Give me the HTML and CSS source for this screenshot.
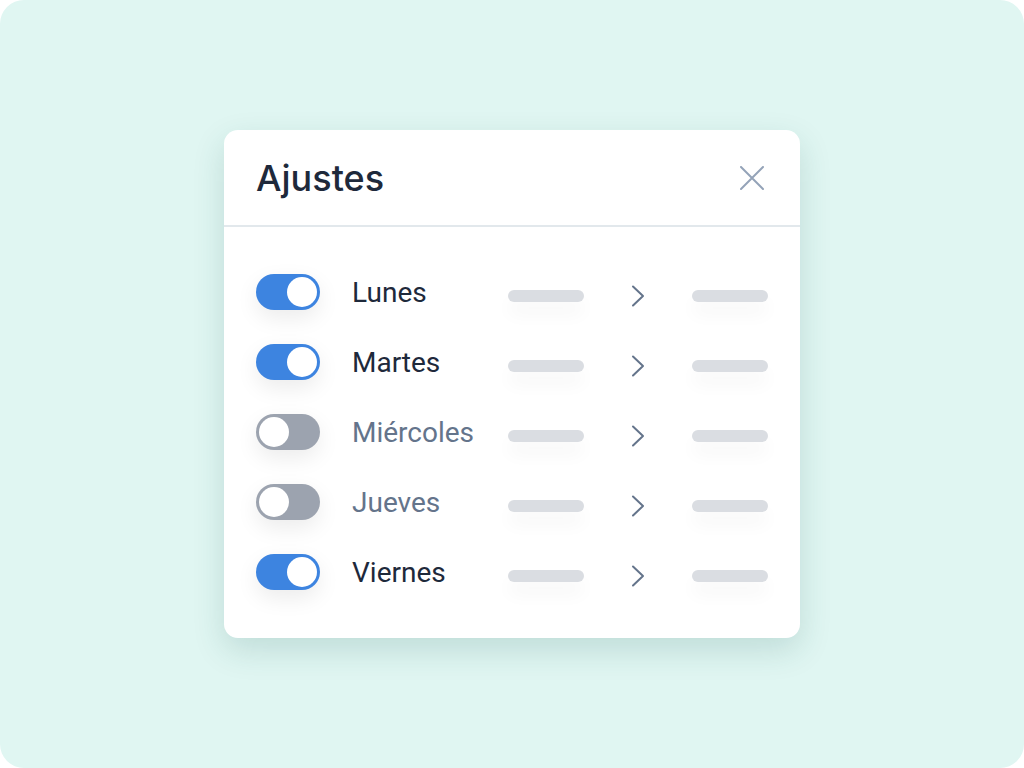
FILE: index.html
```html
<!DOCTYPE html>
<html lang="es">
<head>
    <meta charset="UTF-8">
    <meta name="viewport" content="width=device-width, initial-scale=1.0">
    <title>Ajustes</title>
    <link rel="stylesheet" href="styles.css">
</head>
<body>
    <div class="stage">
        <div class="settings-card">
            <div class="settings-header">
                <h2>Ajustes</h2>
                <button class="close-btn" aria-label="Cerrar">
                    <svg width="24" height="24" viewBox="0 0 24 24" fill="none" stroke="#94a3b8" stroke-width="2" stroke-linecap="round">
                        <path d="M1 1L23 23M23 1L1 23"/>
                    </svg>
                </button>
            </div>
            <div class="settings-body">
                <div class="day-row">
                    <span class="toggle on"><span class="knob"></span></span>
                    <span class="day-name">Lunes</span>
                    <span class="bar"></span>
                    <span class="chevron"><svg width="14" height="22" viewBox="0 0 14 22" fill="none" stroke="#64748b" stroke-width="2" stroke-linecap="round" stroke-linejoin="round"><path d="M2 1.5L12 11L2 20.5"/></svg></span>
                    <span class="bar"></span>
                </div>
                <div class="day-row">
                    <span class="toggle on"><span class="knob"></span></span>
                    <span class="day-name">Martes</span>
                    <span class="bar"></span>
                    <span class="chevron"><svg width="14" height="22" viewBox="0 0 14 22" fill="none" stroke="#64748b" stroke-width="2" stroke-linecap="round" stroke-linejoin="round"><path d="M2 1.5L12 11L2 20.5"/></svg></span>
                    <span class="bar"></span>
                </div>
                <div class="day-row">
                    <span class="toggle"><span class="knob"></span></span>
                    <span class="day-name off">Miércoles</span>
                    <span class="bar"></span>
                    <span class="chevron"><svg width="14" height="22" viewBox="0 0 14 22" fill="none" stroke="#64748b" stroke-width="2" stroke-linecap="round" stroke-linejoin="round"><path d="M2 1.5L12 11L2 20.5"/></svg></span>
                    <span class="bar"></span>
                </div>
                <div class="day-row">
                    <span class="toggle"><span class="knob"></span></span>
                    <span class="day-name off">Jueves</span>
                    <span class="bar"></span>
                    <span class="chevron"><svg width="14" height="22" viewBox="0 0 14 22" fill="none" stroke="#64748b" stroke-width="2" stroke-linecap="round" stroke-linejoin="round"><path d="M2 1.5L12 11L2 20.5"/></svg></span>
                    <span class="bar"></span>
                </div>
                <div class="day-row">
                    <span class="toggle on"><span class="knob"></span></span>
                    <span class="day-name">Viernes</span>
                    <span class="bar"></span>
                    <span class="chevron"><svg width="14" height="22" viewBox="0 0 14 22" fill="none" stroke="#64748b" stroke-width="2" stroke-linecap="round" stroke-linejoin="round"><path d="M2 1.5L12 11L2 20.5"/></svg></span>
                    <span class="bar"></span>
                </div>
            </div>
        </div>
    </div>
</body>
</html>
```

FILE: styles.css
```css
body {
    margin: 0;
    padding: 0;
    background-color: #fff;
    font-family: Roboto, "Liberation Sans", sans-serif;
}

.stage {
    width: 1024px;
    height: 768px;
    background-color: #e0f6f2;
    border-radius: 24px;
    display: flex;
    align-items: center;
    justify-content: center;
}

.settings-card {
    width: 576px;
    background-color: #fff;
    border-radius: 14px;
    box-shadow: 0 12px 32px rgba(20, 90, 80, 0.16);
}

.settings-header {
    height: 95px;
    padding: 0 32px 0 32px;
    display: flex;
    align-items: center;
    justify-content: space-between;
    border-bottom: 2px solid #e2e8ec;
}

.settings-header h2 {
    margin: 0;
    font-family: Inter, "Noto Sans", sans-serif;
    font-size: 36px;
    font-weight: 500;
    color: #1e293b;
}

.close-btn {
    border: none;
    background: none;
    padding: 0;
    margin-right: 4px;
    width: 24px;
    height: 24px;
    display: flex;
    cursor: pointer;
}

.settings-body {
    padding: 47px 32px 48px;
    display: flex;
    flex-direction: column;
    gap: 34px;
}

.day-row {
    display: flex;
    align-items: center;
    height: 36px;
}

.toggle {
    width: 64px;
    height: 36px;
    padding: 3px;
    box-sizing: border-box;
    border-radius: 18px;
    background-color: #9ca3af;
    display: flex;
    justify-content: flex-start;
    margin-right: 32px;
    box-shadow: 0 8px 22px rgba(0, 0, 0, 0.08);
}

.toggle.on {
    background-color: #3d84e0;
    justify-content: flex-end;
}

.knob {
    width: 30px;
    height: 30px;
    border-radius: 50%;
    background-color: #fff;
}

.day-name {
    width: 156px;
    font-size: 28px;
    color: #1e293b;
}

.day-name.off {
    color: #64748b;
}

.bar {
    width: 76px;
    height: 12px;
    border-radius: 6px;
    background-color: #dadde2;
    margin-top: 8px;
    box-shadow: 0 12px 18px rgba(0, 0, 0, 0.04);
}

.chevron {
    width: 108px;
    display: flex;
    justify-content: center;
    margin-top: 8px;
}
```
